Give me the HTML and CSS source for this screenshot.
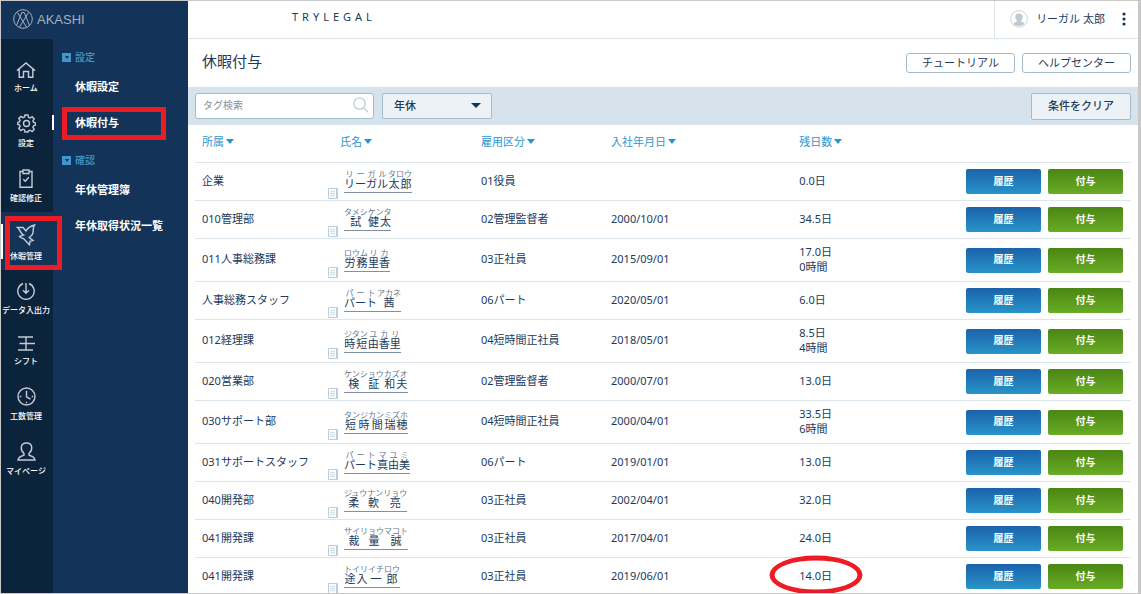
FILE: index.html
```html
<!DOCTYPE html>
<html lang="ja">
<head>
<meta charset="utf-8">
<meta name="viewport" content="width=device-width, initial-scale=1">
<title>休暇付与 | AKASHI</title>
<link rel="stylesheet" href="styles.css">
</head>
<body>
<div class="app">
  <aside class="sidebar">
    <a class="brand" href="#">
      <svg class="brand-mark" viewBox="0 0 20 20" aria-hidden="true"><circle cx="10" cy="10" r="9.3"/><path d="M3.500 16.500 8.800 3.500h2.400L16.500 16.500M4.500 3.500 10 12.500l5.500-9M6.500 18 10 12.500 13.500 18"/></svg>
      <span>AKASHI</span>
    </a>
    <div class="sidebar-body">
      <nav class="rail" aria-label="メイン">
        <a class="rail-item" href="#"><svg width="20" height="16" viewBox="0 0 20 16" aria-hidden="true"><path d="M1 8.600 10 1l9 7.600M3.200 7v8.200h4.300V9.500h5v5.700h4.300V7"/></svg><span>ホーム</span></a>
        <a class="rail-item" href="#"><svg width="19" height="19" viewBox="0 0 19 19" aria-hidden="true"><path d="M8 1h3l.5 2.300 1.600.7 2-1.300 2.100 2.100-1.300 2 .7 1.600 1.900.4v2.400l-1.900.6-.7 1.600 1.300 2-2.100 2.100-2-1.300-1.600.7L11 18H8l-.5-2.100-1.600-.7-2 1.300-2.100-2.100 1.300-2-.7-1.600L.8 10.500V8.400l1.600-.4.7-1.600-1.300-2 2.100-2.100 2 1.300 1.600-.7z"/><circle cx="9.500" cy="9.500" r="3"/></svg><span>設定</span></a>
        <a class="rail-item" href="#"><svg width="14" height="19" viewBox="0 0 14 19" aria-hidden="true"><path d="M4 2.500H1v15.700h12V2.500h-3M4 1h6v3.500H4zM4.300 10.300l2 2 3.500-4"/></svg><span>確認修正</span></a>
        <a class="rail-item is-active" href="#"><svg width="20" height="22" viewBox="0 0 20 22" aria-hidden="true"><path d="M1.500 3.500h5.500l3 3.500c1.500-3 4-4.800 8.500-6-1 1.800-1.500 3.200-1.300 5.500.2 3-1.200 5.200-4 7l3.800 3-3 .8-.5 3.500-5.500-5.800c-1.500-.8-3-1-4.500-2.500l4-1.500C4 9.500 4.800 6 1.500 3.500z"/></svg><span>休暇管理</span></a>
        <a class="rail-item" href="#"><svg width="18" height="18" viewBox="0 0 18 18" aria-hidden="true"><path d="M6 1.500a8.200 8.200 0 1 0 6 0M9 1v10M6 8.200l3 3 3-3"/></svg><span>データ入出力</span></a>
        <a class="rail-item" href="#"><svg width="18" height="15" viewBox="0 0 18 15" aria-hidden="true"><path d="M1 1h15M2.500 7.500H18M1 14h15M9 1v13"/></svg><span>シフト</span></a>
        <a class="rail-item" href="#"><svg width="19" height="19" viewBox="0 0 19 19" aria-hidden="true"><circle cx="9.500" cy="9.500" r="8.500"/><path d="M9.500 3.800v6l4 2.300M2.800 9.500h1.500M14.700 9.500h1.500M9.500 14.700v1.500"/></svg><span>工数管理</span></a>
        <a class="rail-item" href="#"><svg width="19" height="19" viewBox="0 0 19 19" aria-hidden="true"><path d="M7 11.500C4.800 9.500 4 7.500 4.300 5 4.600 2.500 6.500 1 9.500 1s4.900 1.500 5.200 4c.3 2.500-.5 4.500-2.700 6.500v1.700c2.500.8 5.500 1.200 6 4.800H1c.5-3.600 3.500-4 6-4.800z"/></svg><span>マイページ</span></a>
      </nav>
      <nav class="submenu" aria-label="休暇管理">
        <h2 class="submenu-title"><span class="toggle"></span>設定</h2>
        <ul class="submenu-list">
          <li><a href="#">休暇設定</a></li>
          <li><a class="is-current" href="#" aria-current="page">休暇付与</a></li>
        </ul>
        <h2 class="submenu-title"><span class="toggle"></span>確認</h2>
        <ul class="submenu-list">
          <li><a href="#">年休管理簿</a></li>
          <li><a href="#">年休取得状況一覧</a></li>
        </ul>
      </nav>
    </div>
  </aside>

  <main class="main">
    <header class="topbar">
      <span class="company">TRYLEGAL</span>
      <div class="account">
        <svg class="avatar" viewBox="0 0 18 18" aria-hidden="true"><circle cx="9" cy="9" r="8.300" fill="#fff" stroke="#cbd5dc"/><path d="M6.700 10.300C5.500 9 5.200 7.800 5.300 6.500 5.500 4.500 7 3.500 9 3.500s3.500 1 3.700 3c.1 1.300-.2 2.500-1.400 3.800v1.200c1.500.5 2.900 1 3.200 2.500A7.500 7.500 0 0 1 9 16a7.500 7.500 0 0 1-5.500-2c.3-1.500 1.700-2 3.200-2.500z" fill="#bfcad3"/></svg>
        <span class="account-name">リーガル 太郎</span>
        <button class="more" type="button" aria-label="メニュー"><svg width="4" height="14" viewBox="0 0 4 14"><circle cx="2" cy="2" r="1.600"/><circle cx="2" cy="7" r="1.600"/><circle cx="2" cy="12" r="1.600"/></svg></button>
      </div>
    </header>

    <div class="heading">
      <h1>休暇付与</h1>
      <div class="heading-actions">
        <button class="btn-outline" type="button">チュートリアル</button>
        <button class="btn-outline" type="button">ヘルプセンター</button>
      </div>
    </div>

    <form class="filters">
      <label class="search">
        <input type="text" placeholder="タグ検索" aria-label="タグ検索">
        <svg viewBox="0 0 16 16" aria-hidden="true"><circle cx="6.500" cy="6.500" r="5.700"/><path d="m10.700 10.700 4.500 4.500"/></svg>
      </label>
      <label class="kind">
        <select aria-label="休暇種別"><option>年休</option></select>
      </label>
      <button class="clear" type="button">条件をクリア</button>
    </form>

    <div class="table-area">
      <table class="grants">
        <colgroup><col class="c-dept"><col class="c-name"><col class="c-type"><col class="c-date"><col class="c-rest"><col class="c-act"></colgroup>
        <thead>
          <tr>
            <th scope="col"><button type="button">所属</button></th>
            <th scope="col" class="name-head"><button type="button">氏名</button></th>
            <th scope="col"><button type="button">雇用区分</button></th>
            <th scope="col"><button type="button">入社年月日</button></th>
            <th scope="col"><button type="button">残日数</button></th>
            <td></td>
          </tr>
        </thead>
        <tbody>
          <tr><td>企業</td><td class="name"><div><i class="memo"></i><a href="#"><ruby>リーガル<rt>リーガル</rt></ruby><ruby>太郎<rt>タロウ</rt></ruby></a></div></td><td>01役員</td><td></td><td>0.0日</td><td class="act"><div><button class="btn blue" type="button">履歴</button><button class="btn green" type="button">付与</button></div></td></tr>
          <tr><td>010管理部</td><td class="name"><div><i class="memo"></i><a href="#"><ruby>試<rt>タメシ</rt></ruby><ruby>健太<rt>ケンタ</rt></ruby></a></div></td><td>02管理監督者</td><td>2000/10/01</td><td>34.5日</td><td class="act"><div><button class="btn blue" type="button">履歴</button><button class="btn green" type="button">付与</button></div></td></tr>
          <tr class="tall"><td>011人事総務課</td><td class="name"><div><i class="memo"></i><a href="#"><ruby>労務<rt>ロウム</rt></ruby><ruby>里香<rt>リカ</rt></ruby></a></div></td><td>03正社員</td><td>2015/09/01</td><td>17.0日<br>0時間</td><td class="act"><div><button class="btn blue" type="button">履歴</button><button class="btn green" type="button">付与</button></div></td></tr>
          <tr><td>人事総務スタッフ</td><td class="name"><div><i class="memo"></i><a href="#"><ruby>パート<rt>パート</rt></ruby><ruby>茜<rt>アカネ</rt></ruby></a></div></td><td>06パート</td><td>2020/05/01</td><td>6.0日</td><td class="act"><div><button class="btn blue" type="button">履歴</button><button class="btn green" type="button">付与</button></div></td></tr>
          <tr class="tall"><td>012経理課</td><td class="name"><div><i class="memo"></i><a href="#"><ruby>時短<rt>ジタン</rt></ruby><ruby>由香里<rt>ユカリ</rt></ruby></a></div></td><td>04短時間正社員</td><td>2018/05/01</td><td>8.5日<br>4時間</td><td class="act"><div><button class="btn blue" type="button">履歴</button><button class="btn green" type="button">付与</button></div></td></tr>
          <tr><td>020営業部</td><td class="name"><div><i class="memo"></i><a href="#"><ruby>検証<rt>ケンショウ</rt></ruby><ruby>和夫<rt>カズオ</rt></ruby></a></div></td><td>02管理監督者</td><td>2000/07/01</td><td>13.0日</td><td class="act"><div><button class="btn blue" type="button">履歴</button><button class="btn green" type="button">付与</button></div></td></tr>
          <tr class="tall"><td>030サポート部</td><td class="name"><div><i class="memo"></i><a href="#"><ruby>短時間<rt>タンジカン</rt></ruby><ruby>瑞穂<rt>ミズホ</rt></ruby></a></div></td><td>04短時間正社員</td><td>2000/04/01</td><td>33.5日<br>6時間</td><td class="act"><div><button class="btn blue" type="button">履歴</button><button class="btn green" type="button">付与</button></div></td></tr>
          <tr><td>031サポートスタッフ</td><td class="name"><div><i class="memo"></i><a href="#"><ruby>パート<rt>パート</rt></ruby><ruby>真由美<rt>マユミ</rt></ruby></a></div></td><td>06パート</td><td>2019/01/01</td><td>13.0日</td><td class="act"><div><button class="btn blue" type="button">履歴</button><button class="btn green" type="button">付与</button></div></td></tr>
          <tr><td>040開発部</td><td class="name"><div><i class="memo"></i><a href="#"><ruby>柔軟<rt>ジュウナン</rt></ruby><ruby>亮<rt>リョウ</rt></ruby></a></div></td><td>03正社員</td><td>2002/04/01</td><td>32.0日</td><td class="act"><div><button class="btn blue" type="button">履歴</button><button class="btn green" type="button">付与</button></div></td></tr>
          <tr><td>041開発課</td><td class="name"><div><i class="memo"></i><a href="#"><ruby>裁量<rt>サイリョウ</rt></ruby><ruby>誠<rt>マコト</rt></ruby></a></div></td><td>03正社員</td><td>2017/04/01</td><td>24.0日</td><td class="act"><div><button class="btn blue" type="button">履歴</button><button class="btn green" type="button">付与</button></div></td></tr>
          <tr><td>041開発課</td><td class="name"><div><i class="memo"></i><a href="#"><ruby>途入<rt>トイリ</rt></ruby><ruby>一郎<rt>イチロウ</rt></ruby></a></div></td><td>03正社員</td><td>2019/06/01</td><td><span class="circled">14.0日</span></td><td class="act"><div><button class="btn blue" type="button">履歴</button><button class="btn green" type="button">付与</button></div></td></tr>
        </tbody>
      </table>
    </div>
  </main>
</div>
</body>
</html>
```
FILE: styles.css
```css
:root {
  --navy: #133458;
  --navy-dark: #0c233c;
  --ink: #1b3a5c;
  --sky: #2f96cc;
  --line: #dce5eb;
  --mark: #ed1c24;
}

*, *::before, *::after { box-sizing: border-box; }

body {
  margin: 0;
  color: var(--ink);
  background: #fff;
  font-family: "Noto Sans", "Noto Sans CJK JP", sans-serif;
  font-size: 11px;
  line-height: 15px;
}

button, input, select { font: inherit; color: inherit; }
button { cursor: pointer; }
a { color: inherit; text-decoration: none; }

.app {
  display: flex;
  height: 100vh;
  border: 1px solid #c8c8c8;
  border-right-width: 3px;
  overflow: hidden;
}

/* Sidebar */
.sidebar {
  display: flex;
  flex-direction: column;
  flex: none;
  width: 187px;
  background: var(--navy);
  color: #fff;
}
.brand {
  display: flex;
  align-items: center;
  gap: 4px;
  height: 38px;
  padding: 0 0 2px 12px;
  color: #a3b1c0;
  font-family: "Liberation Sans", Arial, sans-serif;
  font-size: 13px;
}
.brand-mark { width: 20px; height: 20px; fill: none; stroke: #a3b1c0; }
.sidebar-body { display: flex; flex: 1; min-height: 0; }

.rail { flex: none; width: 52px; padding-top: 11px; background: var(--navy-dark); }
.rail-item {
  position: relative;
  display: flex;
  flex-direction: column;
  align-items: center;
  gap: 4px;
  padding: 12px 2px 8px 0;
  font-size: 8px;
  font-weight: 500;
  line-height: 12px;
  white-space: nowrap;
}
.rail-item svg { fill: none; stroke: #c3ccd5; stroke-width: 1.4; }
.rail-item.is-active { background: var(--navy); }
.rail-item.is-active::before {
  content: "";
  position: absolute;
  left: 0;
  top: 12px;
  width: 2px;
  height: 35px;
  background: #fff;
}
.rail-item.is-active::after {
  content: "";
  position: absolute;
  z-index: 1;
  left: 4px;
  top: 4px;
  width: 57px;
  height: 54px;
  border: 5px solid var(--mark);
}

.submenu { flex: 1; padding-top: 11px; }
.submenu-title {
  display: flex;
  align-items: center;
  gap: 4px;
  margin: 0;
  padding-left: 9px;
  color: #3f97cd;
  font-size: 10px;
  font-weight: 500;
  line-height: 15px;
}
.toggle {
  display: grid;
  place-items: center;
  width: 9px;
  height: 9px;
  background: #3f97cd;
}
.toggle::before {
  content: "";
  border: 2px solid transparent;
  border-top: 3px solid var(--navy);
  border-bottom: 0;
}
.submenu-list { margin: 0 0 13px; padding: 3px 0 0; list-style: none; }
.submenu-list a {
  position: relative;
  display: block;
  padding: 11px 0 10px 22px;
  font-weight: 700;
  line-height: 15px;
}
.submenu-list a.is-current::before {
  content: "";
  position: absolute;
  left: -1px;
  top: 11px;
  width: 2px;
  height: 15px;
  background: #fff;
}
.submenu-list a.is-current::after {
  content: "";
  position: absolute;
  left: 9px;
  top: 3px;
  width: 104px;
  height: 33px;
  border: 5px solid var(--mark);
}

/* Main column */
.main { display: flex; flex-direction: column; flex: 1; min-width: 0; overflow: hidden; }
.topbar {
  display: flex;
  flex: none;
  justify-content: space-between;
  height: 38px;
  padding-left: 104px;
  border-bottom: 1px solid var(--line);
}
.company { padding-top: 8px; font-size: 11px; letter-spacing: 4px; }
.account {
  display: flex;
  align-items: center;
  gap: 8px;
  padding: 0 12px 2px 15px;
  border-left: 1px solid var(--line);
}
.avatar { width: 18px; height: 18px; }
.more { display: flex; margin-left: 9px; padding: 0; border: 0; background: none; fill: #14345a; }

.heading {
  display: flex;
  align-items: center;
  justify-content: space-between;
  flex: none;
  height: 48px;
  padding: 0 7px 0 14px;
}
h1 { margin: 0; padding-bottom: 4px; font-size: 15px; font-weight: 400; line-height: 20px; }
.heading-actions { display: flex; gap: 7px; }
.btn-outline {
  width: 109px;
  height: 20px;
  padding: 0 0 2px;
  border: 1px solid #a3bccd;
  border-radius: 3px;
  background: #fff;
  line-height: 15px;
}

.filters {
  display: flex;
  align-items: flex-start;
  gap: 8px;
  flex: none;
  height: 38px;
  padding: 6px 7px 0;
  background: #d6e3ec;
}
.search { position: relative; width: 179px; }
.search input {
  display: block;
  width: 100%;
  height: 26px;
  padding: 0 26px 2px 7px;
  border: 1px solid #a3bccd;
  border-radius: 3px;
  background: #fff;
  font-size: 10px;
}
.search input::placeholder { color: #858f98; opacity: 1; }
.search svg {
  position: absolute;
  right: 5px;
  top: 4px;
  width: 16px;
  height: 16px;
  fill: none;
  stroke: #bccddb;
  stroke-width: 1.3;
}
.kind { position: relative; width: 110px; }
.kind select {
  display: block;
  width: 100%;
  height: 26px;
  padding: 0 11px 2px;
  border: 1px solid #a3bccd;
  border-radius: 2px;
  background: #edf2f6;
  font-weight: 500;
  appearance: none;
}
.kind::after {
  content: "";
  position: absolute;
  right: 11px;
  top: 10px;
  border: 5px solid transparent;
  border-top-color: #14345a;
  border-bottom: 0;
  pointer-events: none;
}
.clear {
  width: 100px;
  height: 27px;
  margin-left: auto;
  padding: 0 0 3px;
  border: 1px solid #a3bccd;
  border-radius: 2px;
  background: #edf2f6;
  font-weight: 500;
}

/* Table */
.table-area { padding: 0 7px; }
.grants { width: 100%; border-collapse: separate; border-spacing: 0; table-layout: fixed; }
.c-dept { width: 14.2%; }
.c-name { width: 15.6%; }
.c-type { width: 13.9%; }
.c-date { width: 20.1%; }
.c-act { width: 172px; }
.grants th, .grants td {
  height: 38px;
  padding: 0 0 3px 7px;
  border-bottom: 1px solid var(--line);
  text-align: left;
  vertical-align: middle;
  white-space: nowrap;
}
.grants .tall td { height: 43px; }
.grants th { padding-bottom: 4px; font-weight: 400; }
.grants .name-head { padding-left: 12px; }
.grants th button {
  display: flex;
  align-items: center;
  gap: 2px;
  padding: 0;
  border: 0;
  background: none;
  color: var(--sky);
}
.grants th button::after {
  content: "";
  border: 4px solid transparent;
  border-top: 5px solid #2596d1;
  border-bottom: 0;
}
.grants .name { padding: 0; }
.name div { display: flex; align-items: flex-end; gap: 6px; height: 35px; }
.memo {
  flex: none;
  width: 10px;
  height: 11px;
  border: 1px solid #bccedb;
  border-right-width: 2px;
  border-radius: 1px;
  background: repeating-linear-gradient(#f4f8fa 0 1px, #d5e1e9 1px 2px) content-box;
  padding: 1px;
}
.name a {
  margin-bottom: 6px;
  padding-bottom: 1px;
  border-bottom: 1px solid #8290a5;
  line-height: 14px;
}
.name rt { color: #66788c; font-size: 8px; line-height: 11px; }
.grants .act { padding: 0 8px 0 7px; }
.act div { display: flex; gap: 7px; }
.btn {
  flex: 1;
  height: 25px;
  padding: 0 0 1px;
  border: 0;
  border-radius: 2px;
  color: #fff;
  font-size: 10px;
  font-weight: 700;
}
.blue { background: linear-gradient(#1b62ab, #2994c8); }
.green { background: linear-gradient(#4a8614, #69ac25); }

.circled { position: relative; }
.circled::after {
  content: "";
  position: absolute;
  left: 50%;
  top: 50%;
  width: 93px;
  height: 39px;
  border: 5px solid var(--mark);
  border-radius: 50%;
  transform: translate(-50%, -50%);
}
```
